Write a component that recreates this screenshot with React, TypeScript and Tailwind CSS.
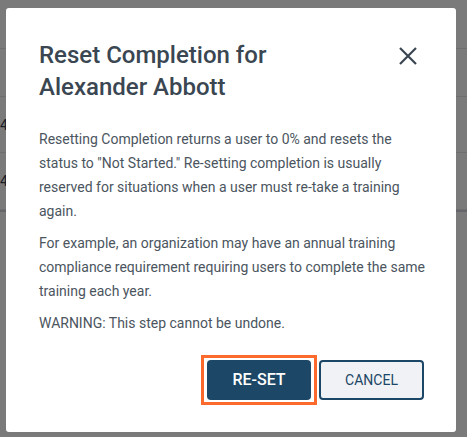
import React from "react";

const rows = [
  { h: "h-[56px]", text: "4" },
  { h: "h-[57px]", text: "4" },
];

export default function App() {
  return (
    <div className="relative h-[437px] w-full overflow-hidden bg-white font-['Roboto',sans-serif]">
      {/* page behind the modal */}
      <div className="flex flex-col">
        <div className="h-[49px] border-b border-gray-200" />
        <div className="h-[48px] border-b border-gray-200" />
        {rows.map((r, i) => (
          <div
            key={i}
            className={`${r.h} flex items-center border-b border-gray-200 text-sm text-gray-700`}
          >
            {r.text}
          </div>
        ))}
        <div className="h-[2px] bg-gray-300" />
      </div>

      {/* overlay */}
      <div className="absolute inset-0 bg-black/[0.52] pl-[6px] pt-[8px]">
        <div className="flex h-[424px] w-[450px] flex-col rounded-[3px] bg-white pb-[27px] pl-[33px] pr-[32px] pt-[31px]">
          <div className="flex items-start justify-between">
            <h2 className="w-[300px] text-[24px] font-medium leading-[32px] text-[#3a4651]">
              Reset Completion for Alexander Abbott
            </h2>
            <button type="button" className="mr-[6px] mt-[7px] text-[#3a4651]" aria-label="Close">
              <svg width="20" height="20" viewBox="0 0 20 20" fill="none" stroke="currentColor" strokeWidth="2.2">
                <path d="M2 2 L18 18 M18 2 L2 18" />
              </svg>
            </button>
          </div>

          <div className="-mr-[4px] mt-[24px] flex flex-col gap-[8px] text-[14px] leading-[24px] text-[#4b5560]">
            <p>
              Resetting Completion returns a user to 0% and resets the status to "Not Started." Re-setting
              completion is usually reserved for situations when a user must re-take a training again.
            </p>
            <p>
              For example, an organization may have an annual training compliance requirement requiring users
              to complete the same training each year.
            </p>
            <p>WARNING: This step cannot be undone.</p>
          </div>

          <div className="mt-auto flex items-center justify-end gap-[2px]">
            <div className="border-[3px] border-[#fb6a2c] px-[3px] py-[2px]">
              <button
                type="button"
                className="block h-[40px] w-[104px] rounded-[4px] bg-[#1c4766] text-[16px] font-medium text-white"
              >
                RE-SET
              </button>
            </div>
            <button
              type="button"
              className="h-[40px] w-[105px] rounded-[4px] border-2 border-[#1c4766] bg-[#f0f2f5] text-[14px] text-[#1c4766]"
            >
              CANCEL
            </button>
          </div>
        </div>
      </div>
    </div>
  );
}
